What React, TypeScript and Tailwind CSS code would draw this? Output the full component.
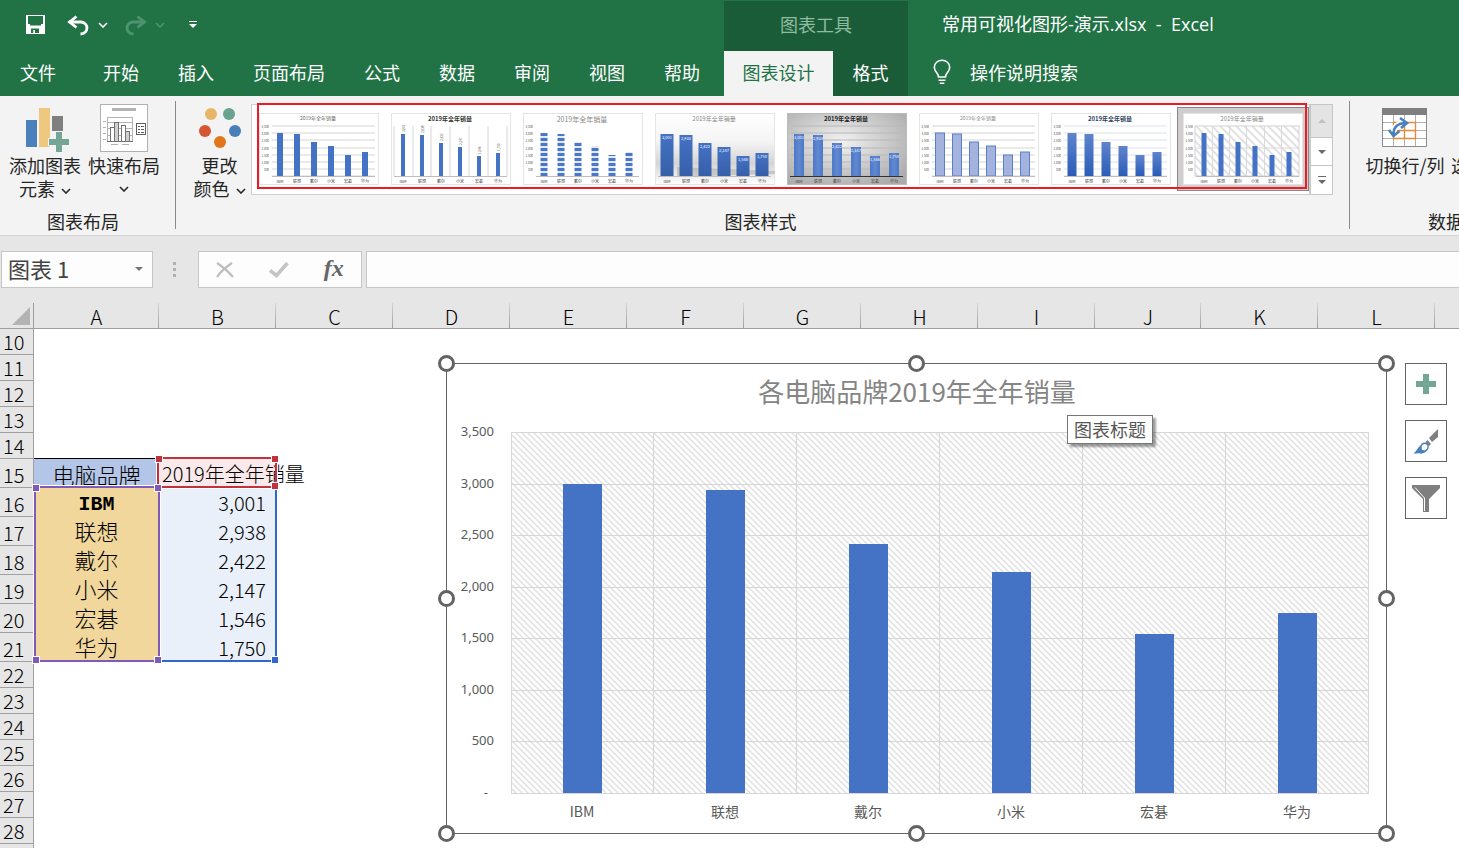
import type { ReactNode } from 'react';
import clsx from 'clsx';

const tabs = ['开始', '插入', '页面布局', '公式', '数据', '审阅', '视图', '帮助'];

const sales = [
  { brand: 'IBM', value: 3001 },
  { brand: '联想', value: 2938 },
  { brand: '戴尔', value: 2422 },
  { brand: '小米', value: 2147 },
  { brand: '宏碁', value: 1546 },
  { brand: '华为', value: 1750 },
];

const columns = ['A', 'B', 'C', 'D', 'E', 'F', 'G', 'H', 'I', 'J', 'K', 'L'];
const rows = Array.from({ length: 20 }, (_, i) => i + 10);

/* ---------- icons ---------- */

function Chevron({ className }: { className?: string }) {
  return (
    <svg viewBox="0 0 10 6" className={clsx('h-[6px] w-[10px]', className)} fill="none" stroke="currentColor" strokeWidth="1.6">
      <path d="M1 1l4 4 4-4" />
    </svg>
  );
}

function SaveIcon() {
  return (
    <svg viewBox="0 0 20 20" className="size-5" fill="#fff">
      <path fillRule="evenodd" d="M0 0h19v19H0zM2 1v9.500h15V1zM5 13.500h8v4.500H9v-3H7.200v3H5z" />
      <path d="M2 9h2v2H2zM15 9h2v2h-2z" />
    </svg>
  );
}

function UndoIcon({ className }: { className?: string }) {
  return (
    <svg viewBox="0 0 22 21" className={clsx('h-[21px] w-[22px]', className)} fill="none" stroke="currentColor" strokeWidth="2.8">
      <path d="M9.500 1.500L2.500 7l7 5.500" />
      <path d="M2.500 7H14c8 .6 8 11.500-.5 12" />
    </svg>
  );
}

function BulbIcon() {
  return (
    <svg viewBox="0 0 18 26" className="h-[26px] w-[18px]" fill="none" stroke="#fff" strokeWidth="1.6">
      <path d="M5.5 18c0-4-4.2-5-4.2-9.800a7.700 7 0 0 1 15.400 0c0 4.800-4.200 5.800-4.200 9.800z" />
      <path d="M5.500 21.200h7M6.800 24.200h4.500" />
    </svg>
  );
}

function AddElementIcon() {
  return (
    <svg viewBox="0 0 48 48" className="size-12">
      <path fill="#4a80bb" d="M5 16h11v27H5z" />
      <path fill="#edc87e" d="M18 4h11v39H18z" />
      <path fill="#7f7f7f" d="M31 12h11v15H31z" />
      <path fill="#f3f3f3" d="M34 27h8v7h7v8h-7v7h-8v-7h-7v-8h7z" />
      <path fill="#74a697" d="M35 28h6v7h7v6h-7v7h-6v-7h-7v-6h7z" />
    </svg>
  );
}

function QuickLayoutIcon() {
  return (
    <svg viewBox="0 0 48 48" className="size-12" fill="none" shapeRendering="crispEdges">
      <path fill="#fff" stroke="#b0b0b0" d="M.5.500h47v47H.5z" />
      <path fill="#b3b3b3" d="M12 4h24v3H12z" />
      <path stroke="#b3b3b3" d="M7.500 13v25M7 13.500h26M7 18.500h26M7 24.500h26M7 31.500h26M32.500 13v25M3 17.500h3M3 23.500h3M3 29.500h3M3 35.500h3M11 40.500h7M22 40.500h7" />
      <path fill="#fff" stroke="#737373" d="M10.500 23.500h4v14h-4zM21.500 21.500h4v16h-4z" />
      <path fill="#d0d0d0" stroke="#737373" d="M14.500 18.500h4v19h-4zM25.500 27.500h4v10h-4z" />
      <path stroke="#737373" d="M7 37.500h26" />
      <path fill="#fff" stroke="#5f5f5f" d="M36.500 19.500h9v11h-9z" />
      <path stroke="#5f5f5f" d="M38 22.500h2M41 22.500h3M38 25.500h2M41 25.500h3M38 28.500h2M41 28.500h3" />
    </svg>
  );
}

function ColorsIcon() {
  return (
    <svg viewBox="0 0 48 48" className="size-12">
      <circle cx="15" cy="10" r="6" fill="#e9b566" />
      <circle cx="33" cy="10" r="6" fill="#69a38f" />
      <circle cx="9" cy="27" r="6" fill="#d65532" />
      <circle cx="39" cy="27" r="6" fill="#4a7eb8" />
      <circle cx="24" cy="38" r="6" fill="#e2761b" />
    </svg>
  );
}

function SwitchIcon() {
  return (
    <svg viewBox="0 0 48 48" className="size-12" fill="none">
      <path fill="#fff" stroke="#8a8a8a" d="M1.500 4.500h44v38h-44z" />
      <path fill="#7f7f7f" d="M1 4h45v7H1z" />
      <path stroke="#b0b0b0" d="M12.500 11v31M23.500 11v31M34.500 11v31M2 18.500h43M2 26.500h43M2 34.500h43" />
      <path stroke="#e38a3c" strokeWidth="1.400" d="M12.500 18.500h22v16h-22zM23.500 18.500v16M12.500 26.500h22" />
      <path stroke="#fff" strokeWidth="6" d="M12.500 31C12 23 17 19 25 19" />
      <path stroke="#4a80bb" strokeWidth="2.600" d="M12.500 31C12 23 17 19 25 19M19 14l7 5-6 5M8 26l4.500 6 6-5" />
    </svg>
  );
}

function BrushIcon() {
  return (
    <svg viewBox="0 0 28 28" className="size-7">
      <path fill="#7f7f7f" d="M26 2v8l-6 5-3-4z" />
      <path fill="#7f7f7f" d="M15.500 13l3.500 4-2 2-3.500-4z" />
      <path fill="#fff" stroke="#4a80bb" strokeWidth="1.400" d="M9 19c1-3 5-4 7-1 1 4-2 7-7 8z" />
      <path fill="#4a80bb" d="M1 26.500c4-2 4-6 8-8l.5 4 3 1 3-2c-1 4-5 5-14.500 5z" />
    </svg>
  );
}

function FilterIcon() {
  return (
    <svg viewBox="0 0 28 28" className="size-7">
      <path fill="#7f7f7f" d="M0 1h28v3L17 15v13h-6V15L0 4z" />
      <path fill="none" stroke="#fff" strokeWidth="1" d="M3 3.500l9.500 10.500v13" />
    </svg>
  );
}

/* ---------- chart style gallery ---------- */

type ThumbStyle = {
  name: string;
  bar: number;
  fill: string;
  wide?: boolean;
  grid?: 'h' | 'v' | 'hatch';
  gridColor?: string;
  stroke?: string;
  bg?: string;
  title: string;
  titleSize: number;
  bold?: boolean;
  values?: 'above' | 'inside';
  axis?: string;
};

const thumbs: ThumbStyle[] = [
  { name: '样式 1', bar: 6, fill: '#4472c4', grid: 'h', title: '#666', titleSize: 5 },
  { name: '样式 2', bar: 4, fill: '#4472c4', wide: true, grid: 'v', title: '#333', titleSize: 6, bold: true, values: 'above' },
  { name: '样式 3', bar: 7, fill: 'url(#th-stripe)', title: '#888', titleSize: 7 },
  { name: '样式 4', bar: 13, fill: 'url(#th-deep)', wide: true, bg: 'url(#th-floor)', title: '#888', titleSize: 6, values: 'inside' },
  { name: '样式 5', bar: 10, fill: 'url(#th-soft)', wide: true, grid: 'h', gridColor: '#b8b8b8', bg: 'url(#th-gray)', title: '#222', titleSize: 6, bold: true, values: 'inside', axis: '#333' },
  { name: '样式 6', bar: 9, fill: '#a3b3dd', stroke: '#5b7fcb', grid: 'h', title: '#888', titleSize: 5 },
  { name: '样式 7', bar: 9, fill: 'url(#th-blue)', grid: 'h', gridColor: '#dbe1ea', title: '#2f4260', titleSize: 6, bold: true },
  { name: '样式 8', bar: 5, fill: '#4472c4', grid: 'hatch', title: '#888', titleSize: 6 },
];

const thumbTops = [20, 21, 29, 33, 42, 39];
const thumbGrid = [13, 20, 27, 35, 42, 49, 56, 63];

function Thumb({ s }: { s: ThumbStyle }) {
  const x0 = s.wide ? 12 : 21;
  const step = s.wide ? 19 : 17;
  return (
    <svg viewBox="0 0 120 72" className="block h-[72px] w-[120px]">
      <rect x=".5" y=".5" width="119" height="71" fill={s.bg ?? '#fff'} stroke={s.axis ? '#bbb' : '#e4e4e4'} />
      {s.grid === 'hatch' && <rect x="12" y="13" width="104" height="50" fill="url(#th-hatch)" stroke="#d2d2d2" />}
      {s.grid === 'hatch' && <path stroke="#dadada" d="M29.500 13v50M46.500 13v50M63.500 13v50M81.500 13v50M98.500 13v50M12 35h104" />}
      {s.grid === 'h' &&
        thumbGrid.map((y) => (
          <path key={y} stroke={s.gridColor ?? '#d4d4d4'} d={`M${s.wide ? 4 : 13} ${y}H116`} />
        ))}
      {s.grid === 'v' && <path stroke="#d4d4d4" fill="none" d="M3 13v50M22 13v50M40 13v50M59 13v50M78 13v50M97 13v50M116 13v50" />}
      <text x="59" y={s.titleSize + 2} textAnchor="middle" fontSize={s.titleSize} fontWeight={s.bold ? 700 : 400} fill={s.title}>
        2019年全年销量
      </text>
      {!s.wide &&
        thumbGrid.map((y, i) => (
          <text key={y} x="10" y={y + 2} textAnchor="end" fontSize="3" fill="#555">
            {i === 7 ? '-' : (3500 - i * 500).toLocaleString('en-US')}
          </text>
        ))}
      {s.name === '样式 4' && <path fill="#8a8a8a" opacity=".35" d="M22 54l98 4v3l-98 3z" />}
      {sales.map((d, i) => {
        const cx = x0 + i * step;
        const top = thumbTops[i] + (s.wide ? 1 : 0);
        return (
          <g key={d.brand}>
            <rect x={cx - s.bar / 2} y={top} width={s.bar} height={63 - top} fill={s.fill} stroke={s.stroke} />
            {s.values === 'inside' && (
              <text x={cx} y={top + 5} textAnchor="middle" fontSize="4" fill="#fff">
                {d.value.toLocaleString('en-US')}
              </text>
            )}
            {s.values === 'above' && (
              <text transform={`translate(${cx + 2} ${top - 2}) rotate(-90)`} fontSize="3" fill="#444">
                {d.value.toLocaleString('en-US')}
              </text>
            )}
            <text x={cx} y="70" textAnchor="middle" fontSize="4" fill="#444">
              {d.brand}
            </text>
          </g>
        );
      })}
      <path stroke={s.axis ?? '#bdbdbd'} d={`M${s.wide ? 3 : 13} 63.500H116`} />
    </svg>
  );
}

function ThumbDefs() {
  return (
    <svg className="absolute size-0" aria-hidden="true">
      <defs>
        <pattern id="th-stripe" width="4" height="5" patternUnits="userSpaceOnUse">
          <rect width="4" height="5" fill="#e3eaf6" />
          <rect width="4" height="3" fill="#4a77c8" />
        </pattern>
        <pattern id="th-hatch" width="8" height="8" patternUnits="userSpaceOnUse">
          <path stroke="#e2e2e2" strokeWidth="2" d="M-2 -2l12 12M-2 6l4 4M6 -2l4 4" />
        </pattern>
        <linearGradient id="th-deep" x1="0" y1="0" x2="0" y2="1">
          <stop offset="0" stopColor="#4472c4" />
          <stop offset="1" stopColor="#365fa8" />
        </linearGradient>
        <linearGradient id="th-soft" x1="0" y1="0" x2="1" y2="0">
          <stop offset="0" stopColor="#4a78c8" />
          <stop offset=".5" stopColor="#6288d0" />
          <stop offset="1" stopColor="#4a78c8" />
        </linearGradient>
        <linearGradient id="th-blue" x1="0" y1="0" x2="0" y2="1">
          <stop offset="0" stopColor="#6084cc" />
          <stop offset="1" stopColor="#2a5cb8" />
        </linearGradient>
        <linearGradient id="th-floor" x1="0" y1="0" x2="0" y2="1">
          <stop offset="0" stopColor="#fff" />
          <stop offset=".4" stopColor="#f4f4f4" />
          <stop offset=".7" stopColor="#d4d4d4" />
          <stop offset="1" stopColor="#fff" />
        </linearGradient>
        <radialGradient id="th-gray" cx=".45" cy=".4" r=".7">
          <stop offset="0" stopColor="#f2f2f2" />
          <stop offset="1" stopColor="#ababab" />
        </radialGradient>
      </defs>
    </svg>
  );
}

/* ---------- ribbon ---------- */

function RibbonButton({ icon, width, children }: { icon: ReactNode; width: string; children: ReactNode }) {
  return (
    <button type="button" className={clsx('flex shrink-0 flex-col items-center whitespace-nowrap leading-[23px]', width)}>
      {icon}
      <span className="mt-[2px]">{children}</span>
    </button>
  );
}

function RibbonGroup({ label, className, children }: { label: string; className?: string; children: ReactNode }) {
  return (
    <section className={clsx('flex shrink-0 flex-col', className)}>
      <div className="flex h-[105px]">{children}</div>
      <h2 className="text-center leading-6">{label}</h2>
    </section>
  );
}

function Divider() {
  return <div className="-mt-[3px] mb-[6px] w-px shrink-0 bg-[#8a8a8a]" />;
}

function Ribbon() {
  return (
    <div className="flex h-[140px] overflow-hidden border-b border-[#d2d2d2] bg-[#f3f3f3] pt-2 text-lg text-[#262626]">
      <RibbonGroup label="图表布局" className="pr-[13px] pl-1">
        <RibbonButton icon={<AddElementIcon />} width="w-[82px]">
          添加图表
          <br />
          元素<Chevron className="ml-[6px] inline-block align-middle" />
        </RibbonButton>
        <RibbonButton icon={<QuickLayoutIcon />} width="w-[76px]">
          快速布局
          <br />
          <Chevron className="mx-auto mt-[9px]" />
        </RibbonButton>
      </RibbonGroup>
      <Divider />
      <RibbonGroup label="图表样式" className="pr-4 pl-3">
        <RibbonButton icon={<ColorsIcon />} width="w-[63px]">
          更改
          <br />
          颜色<Chevron className="ml-[6px] inline-block align-middle" />
        </RibbonButton>
        <div className="relative flex h-[91px]">
          <div className="flex border border-[#cfcfcf] bg-white py-[2px] pl-px">
            {thumbs.map((s, i) => (
              <button
                key={s.name}
                type="button"
                aria-label={s.name}
                className={clsx('h-[84px] w-[132px] border p-[5px]', i === 7 ? 'border-[#868686] bg-[#cfcdcd]' : 'border-transparent')}
              >
                <Thumb s={s} />
              </button>
            ))}
          </div>
          <div className="grid w-[23px] grid-rows-[32px_29px_28px] border border-[#c6c6c6] text-[#6a6a6a]">
            <button type="button" aria-label="上一行" className="grid place-items-center bg-[#e4e4e4] text-[#c0c0c0]">
              <svg viewBox="0 0 8 4" className="h-1 w-2" fill="currentColor"><path d="M0 4l4-4 4 4z" /></svg>
            </button>
            <button type="button" aria-label="下一行" className="grid place-items-center border-y border-[#c6c6c6] bg-white">
              <svg viewBox="0 0 8 4" className="h-1 w-2" fill="currentColor"><path d="M0 0h8L4 4z" /></svg>
            </button>
            <button type="button" aria-label="其他" className="grid place-items-center bg-white">
              <svg viewBox="0 0 8 8" className="size-2" fill="currentColor"><path d="M0 0h8v1H0zM0 4h8L4 8z" /></svg>
            </button>
          </div>
          <div className="pointer-events-none absolute -top-px right-[26px] left-[6px] h-[86px] border-2 border-[#ed1c24]" />
        </div>
      </RibbonGroup>
      <Divider />
      <RibbonGroup label="数据" className="pl-[14px]">
        <RibbonButton icon={<SwitchIcon />} width="w-[82px]">切换行/列</RibbonButton>
        <RibbonButton icon={<SwitchIcon />} width="w-[82px]">选择数据</RibbonButton>
      </RibbonGroup>
    </div>
  );
}

function TitleBar() {
  return (
    <header className="grid grid-cols-[724px_184px_1fr] grid-rows-[51px_45px] bg-[#217346] text-lg whitespace-nowrap text-white">
      <div className="flex items-center pb-px pl-[26px]">
        <button type="button" aria-label="保存"><SaveIcon /></button>
        <button type="button" aria-label="撤消" className="ml-[21px]"><UndoIcon /></button>
        <button type="button" aria-label="撤消选项" className="ml-[9px]"><Chevron /></button>
        <button type="button" aria-label="恢复" className="ml-[17px] text-[#4f9470]"><UndoIcon className="-scale-x-100" /></button>
        <button type="button" aria-label="恢复选项" className="ml-2 text-[#4f9470]"><Chevron /></button>
        <button type="button" aria-label="自定义快速访问工具栏" className="ml-6">
          <svg viewBox="0 0 8 8" className="size-2" fill="#fff"><path d="M0 0h8v1H0zM0 3h8L4 7z" /></svg>
        </button>
      </div>
      <div className="mt-px grid place-items-center bg-[#1b5c38] pb-1 text-[#8fbba1]">图表工具</div>
      <h1 className="self-center pb-[3px] pl-[34px] font-['Open_Sans','Noto_Sans_CJK_SC',sans-serif]">常用可视化图形-演示.xlsx&nbsp; -&nbsp; Excel</h1>

      <nav className="flex items-center gap-[39px] pb-1 pl-5">
        <button type="button" className="mr-2">文件</button>
        {tabs.map((t) => (
          <button key={t} type="button">{t}</button>
        ))}
      </nav>
      <div className="flex bg-[#1b5c38]">
        <button type="button" className="w-[109px] bg-[#f3f3f3] pb-1 text-[#217346]">图表设计</button>
        <button type="button" className="flex-1 pb-1">格式</button>
      </div>
      <button type="button" className="flex items-center gap-[19px] pb-1 pl-[25px]">
        <BulbIcon />
        操作说明搜索
      </button>
    </header>
  );
}

function FormulaBar() {
  return (
    <div className="flex h-[67px] pt-[15px] pl-px">
      <div className="relative h-[37px] w-[152px]">
        <input
          aria-label="名称框"
          defaultValue="图表 1"
          className="size-full border border-[#c6c6c6] bg-[#fdfdfd] pb-1 pl-[6px] text-[22px] leading-8 text-[#444]"
        />
        <svg viewBox="0 0 8 4" className="absolute top-4 right-[10px] h-1 w-2" fill="#777"><path d="M0 0h8L4 4z" /></svg>
      </div>
      <div className="ml-5 flex h-[37px] w-[3px] flex-col justify-center gap-[3px]">
        <i className="size-[3px] bg-[#b0b0b0]" />
        <i className="size-[3px] bg-[#b0b0b0]" />
        <i className="size-[3px] bg-[#b0b0b0]" />
      </div>
      <div className="ml-[22px] flex h-[37px] w-[164px] items-center justify-around border border-[#c6c6c6] bg-[#fdfdfd]">
        <button type="button" aria-label="取消">
          <svg viewBox="0 0 18 16" className="h-4 w-[18px]" fill="none" stroke="#bdbdbd" strokeWidth="2.200"><path d="M1 1c6 4 11 8 16 14M16 1C10 5 5 9 1 15" /></svg>
        </button>
        <button type="button" aria-label="输入">
          <svg viewBox="0 0 20 16" className="h-4 w-5" fill="none" stroke="#c4c4c4" strokeWidth="3.600"><path d="M1 8.500l6.500 5L18.500 1" /></svg>
        </button>
        <button type="button" className="pb-1 font-['Liberation_Serif',serif] text-2xl leading-8 font-bold text-[#666] italic">fx</button>
      </div>
      <input aria-label="编辑栏" className="ml-1 h-[37px] min-w-0 flex-1 border border-r-0 border-[#c6c6c6] bg-[#fdfdfd]" />
    </div>
  );
}

/* ---------- sheet ---------- */

function SheetRow({ n }: { n: number }) {
  const item = n >= 16 && n <= 21 ? sales[n - 16] : undefined;
  const tall = n >= 15 && n <= 21;
  return (
    <tr className={tall ? 'h-[29px]' : 'h-[26px]'}>
      <th
        scope="row"
        className={clsx('border-r border-b border-[#a0a0a0] bg-[#e6e6e6] p-0 pl-[3px] text-left font-light', tall && 'pt-1')}
      >
        {n}
      </th>
      {n === 14 && <td className="border-b border-black" />}
      {n === 15 && <td className="bg-[#b4c6e7] p-0 text-center text-[22px] font-light">电脑品牌</td>}
      {n === 15 && <td className="bg-[#f9e9ea] p-0 pl-[3px] font-light whitespace-nowrap">2019年全年销量</td>}
      {item && (
        <td
          className={clsx(
            'bg-[#f2d79d] p-0 text-center',
            item.brand === 'IBM' ? "pt-1 font-['Liberation_Mono',monospace] font-bold" : 'pb-1 text-[22px] font-light',
          )}
        >
          {item.brand}
        </td>
      )}
      {item && <td className="bg-[#e9f0fa] p-0 pr-[10px] text-right font-light">{item.value.toLocaleString('en-US')}</td>}
    </tr>
  );
}

function Handle({ className }: { className: string }) {
  return <i className={clsx('absolute size-2 border border-white', className)} />;
}

// coloured outlines that mark the ranges feeding the selected chart
function RangeMarks() {
  return (
    <>
      <div className="absolute top-[183px] left-[158px] h-[176px] w-[119px] border-2 border-[#2f68c8]">
        <Handle className="-right-1 -bottom-1 bg-[#2f68c8]" />
      </div>
      <div className="absolute top-[154px] left-[157px] h-[31px] w-[120px] border-2 border-[#c0323e] outline outline-white">
        <Handle className="-top-1 -left-1 bg-[#c0323e]" />
        <Handle className="-top-1 -right-1 bg-[#c0323e]" />
        <Handle className="-right-1 -bottom-1 bg-[#c0323e]" />
      </div>
      <div className="absolute top-[183px] left-[34px] h-[176px] w-[126px] border-2 border-[#8159b8] outline outline-white">
        <Handle className="-top-1 -left-1 bg-[#8159b8]" />
        <Handle className="-top-1 -right-1 bg-[#8159b8]" />
        <Handle className="-bottom-1 -left-1 bg-[#8159b8]" />
        <Handle className="-right-1 -bottom-1 bg-[#8159b8]" />
      </div>
    </>
  );
}

/* ---------- chart object ---------- */

const PLOT = { left: 65, top: 69, width: 858, height: 361, max: 3500 };
const handles = [
  [0, 0], [470, 0], [940, 0],
  [0, 235], [940, 235],
  [0, 470], [470, 470], [940, 470],
];

function SalesChart() {
  const step = PLOT.width / sales.length;
  const base = PLOT.top + PLOT.height;
  return (
    <svg viewBox="0 0 941 471" className="h-[471px] w-[941px] overflow-visible" role="img">
      <defs>
        <pattern id="hatch" width="6" height="6" patternUnits="userSpaceOnUse">
          <path stroke="#e0e0e0" strokeWidth="1.500" d="M-1 -1l8 8M-1 5l2 2M5 -1l2 2" />
        </pattern>
      </defs>
      <rect x=".5" y=".5" width="940" height="470" fill="#fff" stroke="#636363" strokeWidth="1" />
      <text x="471" y="39" textAnchor="middle" fontSize="26" fill="#858585">
        各电脑品牌2019年全年销量
      </text>
      <rect x={PLOT.left} y={PLOT.top} width={PLOT.width} height={PLOT.height} fill="url(#hatch)" />
      {Array.from({ length: 8 }, (_, i) => {
        const y = PLOT.top + Math.round((PLOT.height / 7) * i);
        return (
          <g key={i}>
            <path stroke="#d6d6d6" d={`M${PLOT.left} ${y + 0.5}h${PLOT.width}`} />
            <text x={i === 7 ? 42 : 48} y={y + 4} textAnchor="end" className="font-['Noto_Sans']" fontSize="13" fill="#595959">
              {i === 7 ? '-' : (PLOT.max - i * 500).toLocaleString('en-US')}
            </text>
          </g>
        );
      })}
      {Array.from({ length: 7 }, (_, i) => (
        <path key={i} stroke="#d6d6d6" d={`M${PLOT.left + 0.5 + i * step - (i ? 1 : 0)} ${PLOT.top}v${PLOT.height}`} />
      ))}
      {sales.map((d, i) => {
        const h = Math.floor((d.value / PLOT.max) * PLOT.height);
        const x = PLOT.left + i * step + 52;
        return (
          <g key={d.brand}>
            <rect x={x} y={base - h} width="39" height={h} fill="#4472c4" />
            <text x={x + 19} y={base + 24} textAnchor="middle" fontSize="14" fill="#595959">
              {d.brand}
            </text>
          </g>
        );
      })}
      {handles.map(([x, y]) => (
        <circle key={`${x}-${y}`} cx={x + 0.5} cy={y + 0.5} r="7" fill="#fff" stroke="#636363" strokeWidth="3" />
      ))}
    </svg>
  );
}

function SideButton({ label, children }: { label: string; children: ReactNode }) {
  return (
    <button type="button" aria-label={label} className="grid size-[42px] place-items-center border border-[#636363] bg-white">
      {children}
    </button>
  );
}

function Sheet() {
  return (
    <main className="relative flex-1 overflow-hidden bg-white">
      <table className="w-full table-fixed border-separate border-spacing-0 text-xl leading-none text-black">
        <colgroup>
          <col className="w-[34px]" />
          <col className="w-[125px]" />
          {columns.slice(1).map((c) => (
            <col key={c} className={c === 'J' ? 'w-[106px]' : 'w-[117px]'} />
          ))}
          <col />
        </colgroup>
        <thead className="bg-[#e6e6e6]">
          <tr className="h-[26px]">
            <th className="border-r border-b border-[#a0a0a0] p-0">
              <svg viewBox="0 0 18 18" className="ml-3 size-[18px]"><path d="M18 0v18H0z" fill="#b3b3b3" /></svg>
            </th>
            {columns.map((c) => (
              <th key={c} scope="col" className="border-b border-[#a0a0a0] bg-linear-to-b from-[#d4d4d4] to-[#a0a0a0] bg-[length:1px_100%] bg-right bg-no-repeat p-0 pt-[2px] font-light">
                {c}
              </th>
            ))}
            <th className="border-b border-[#a0a0a0] p-0" />
          </tr>
        </thead>
        <tbody>
          {rows.map((n) => (
            <SheetRow key={n} n={n} />
          ))}
        </tbody>
      </table>

      <RangeMarks />
      <div className="absolute top-[60px] left-[446px] flex gap-[18px]">
        <SalesChart />
        <div className="flex flex-col gap-[15px]">
          <SideButton label="图表元素">
            <svg viewBox="0 0 20 20" className="size-5"><path d="M7 0h6v7h7v6h-7v7H7v-7H0V7h7z" fill="#74a697" /></svg>
          </SideButton>
          <SideButton label="图表样式"><BrushIcon /></SideButton>
          <SideButton label="图表筛选器"><FilterIcon /></SideButton>
        </div>
      </div>
      <div role="tooltip" className="absolute top-[112px] left-[1067px] border border-[#767676] bg-white px-[6px] text-lg leading-[27px] text-[#575757] shadow-[3px_3px_2px_#00000060]">
        图表标题
      </div>
    </main>
  );
}

export default function App() {
  return (
    <div className="flex h-screen flex-col overflow-hidden bg-[#e6e6e6] font-['Noto_Sans_CJK_SC',sans-serif]">
      <ThumbDefs />
      <TitleBar />
      <Ribbon />
      <FormulaBar />
      <Sheet />
    </div>
  );
}
